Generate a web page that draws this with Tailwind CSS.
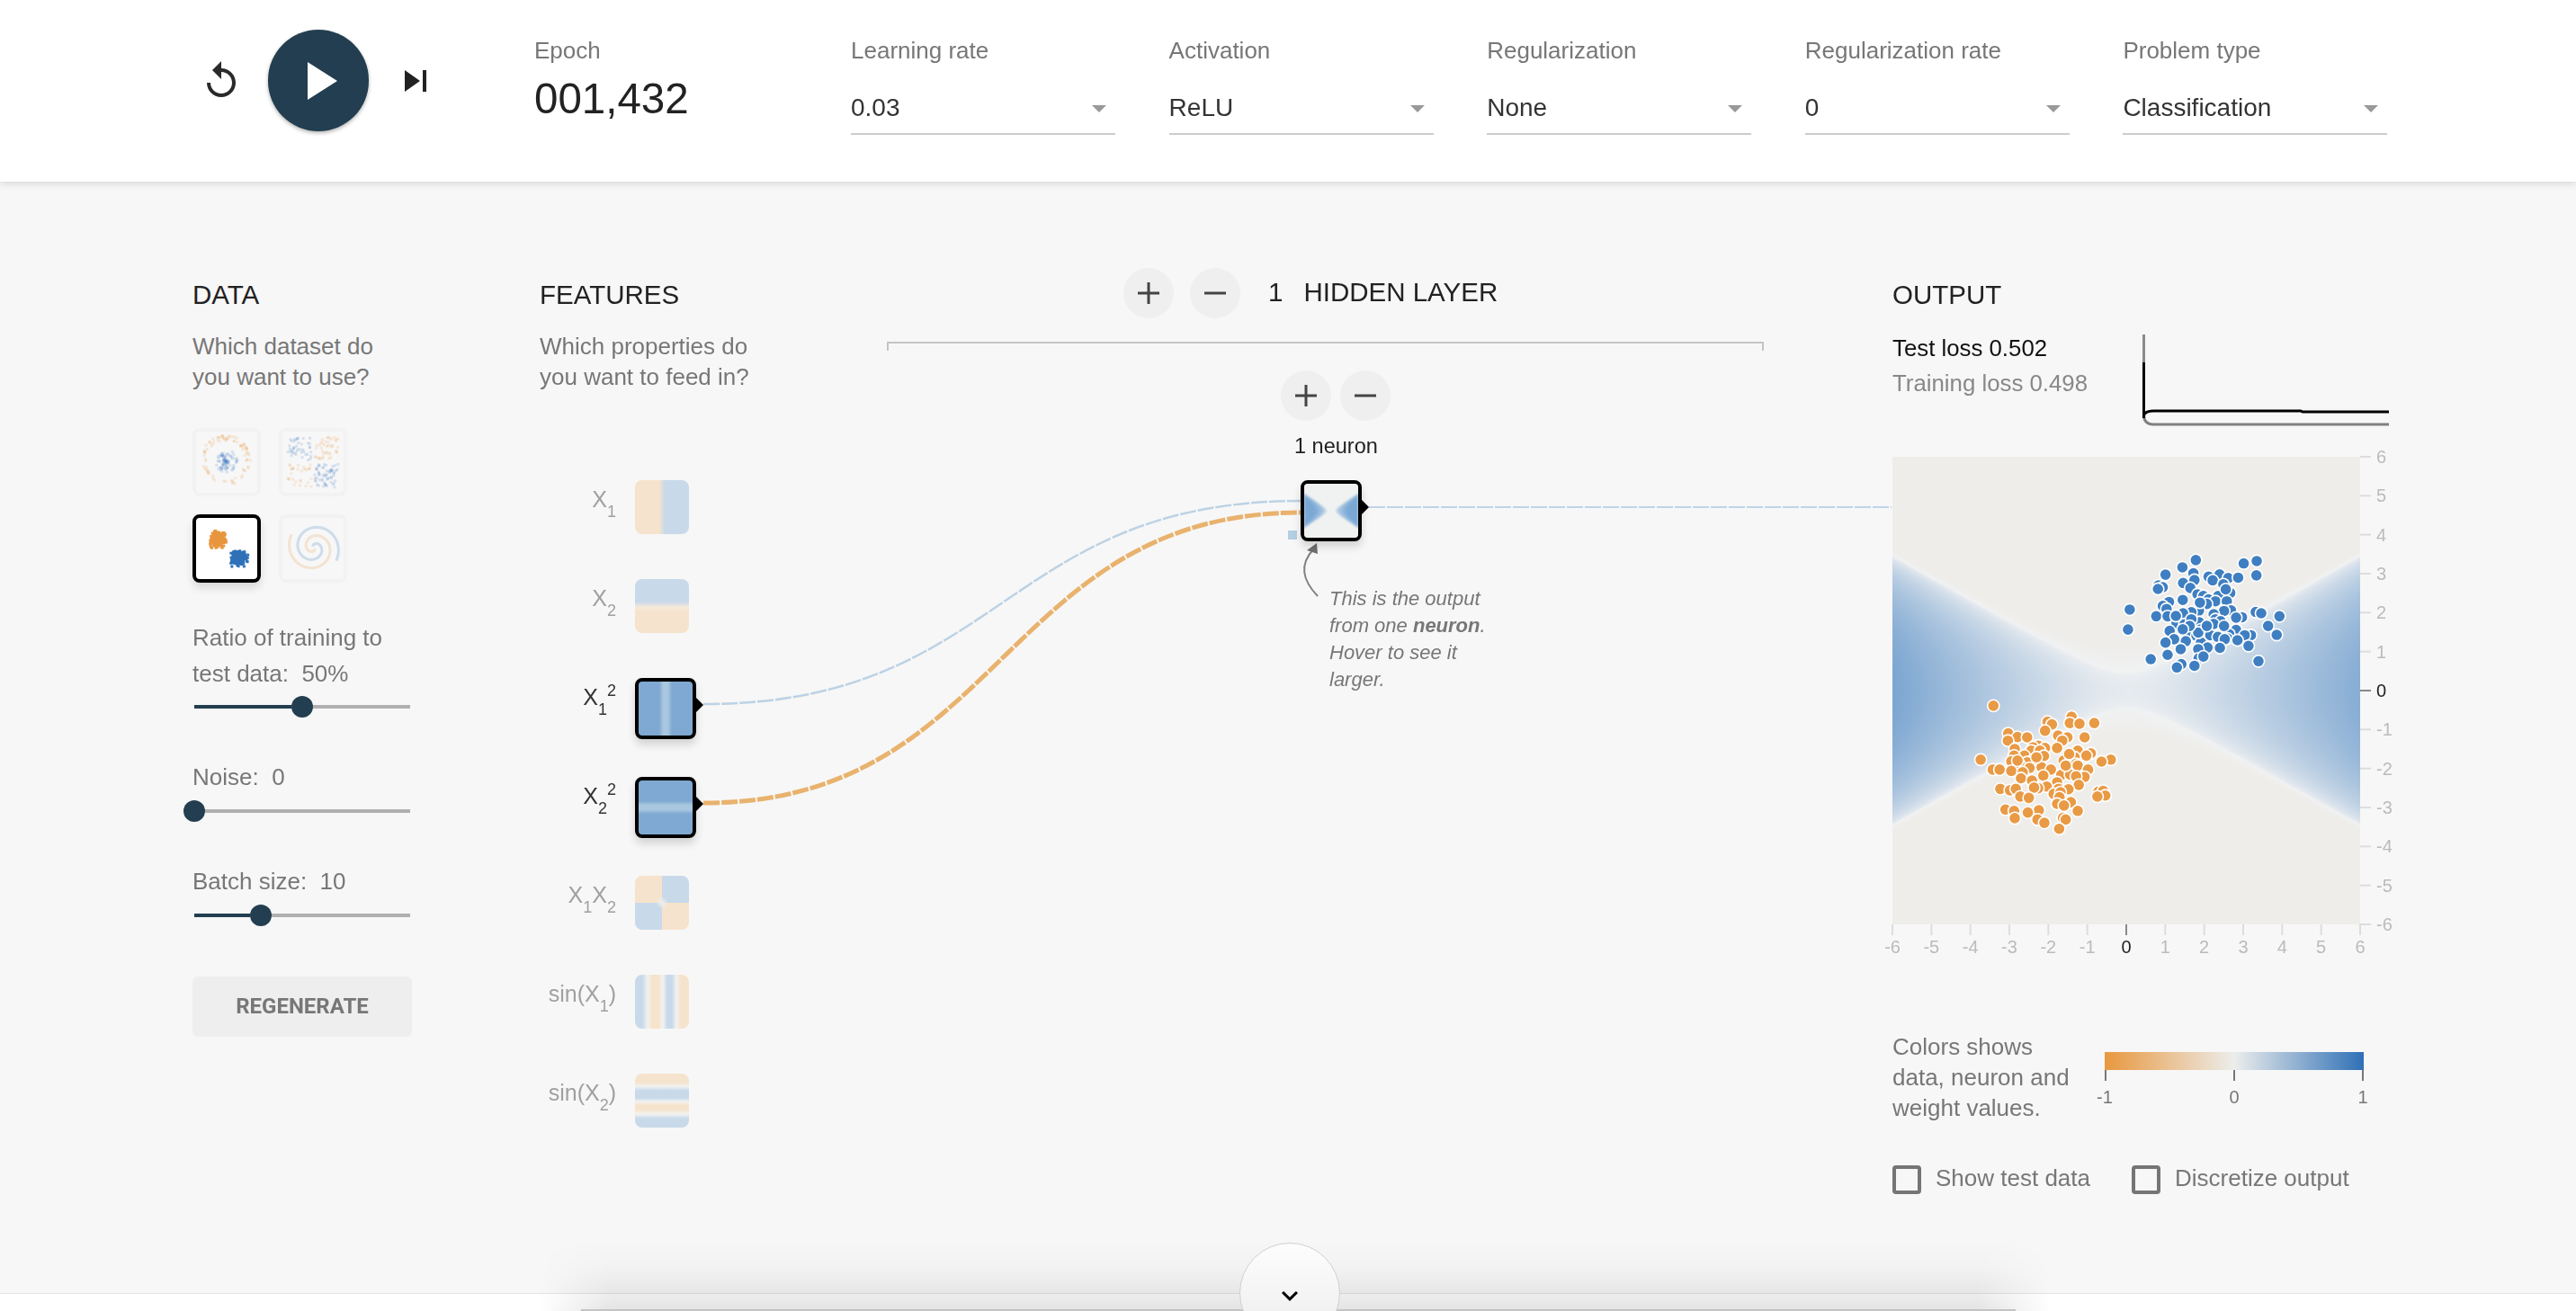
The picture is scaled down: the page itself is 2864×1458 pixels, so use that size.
<!DOCTYPE html>
<html lang="en">
<head>
    <meta charset="UTF-8">
    <title>A Neural Network Playground</title>
    <script src="https://cdn.jsdelivr.net/npm/@tailwindcss/browser@4"></script>
</head>
<body class="bg-[#f7f7f7] [font-family:'Liberation_Sans',Arial,sans-serif] text-[#777] overflow-hidden">
<div class="relative w-[2864px] h-[1458px] overflow-hidden">

    <!-- Top controls -->
    <header class="relative z-20 h-[202px] bg-white shadow-[0_2px_8px_rgba(0,0,0,0.14)] flex items-start pl-[222px]">
        <div class="flex items-center pt-[33px]">
            <svg class="w-12 h-12 fill-[#2a2a2a]" viewBox="0 0 24 24"><path d="M12 5V1L7 6l5 5V7c3.31 0 6 2.69 6 6s-2.69 6-6 6-6-2.69-6-6H4c0 4.42 3.58 8 8 8s8-3.58 8-8-3.58-8-8-8z"/></svg>
            <div class="ml-[28px] w-[112px] h-[113px] rounded-full bg-[#233e50] shadow-[0_2px_4px_rgba(0,0,0,0.3)] flex items-center justify-center">
                <svg class="w-[72px] h-[72px] fill-white" viewBox="0 0 24 24"><path d="M8 5v14l11-7z"/></svg>
            </div>
            <svg class="ml-[28px] w-12 h-12 fill-[#222]" viewBox="0 0 24 24"><path d="M6 18l8.5-6L6 6v12zM16 6v12h2V6h-2z"/></svg>
        </div>
        <div class="ml-[108px] w-[352px] pt-[41px]">
            <div class="text-[26px] leading-[30px]">Epoch</div>
            <div class="mt-[11px] text-[47.5px] leading-[56px] text-[#222]">001,432</div>
        </div>
        <div class="flex gap-[59.6px] pt-[41px]">
            <div class="w-[294px]">
                <div class="text-[26px] leading-[30px]">Learning rate</div>
                <div class="mt-[30px] h-[49px] pt-[2px] border-b-2 border-[#ccc] flex justify-between text-[28px] leading-[34px] text-[#333]">0.03<svg class="w-4 h-2 mt-[14px] mr-[10px] fill-[#999]" viewBox="0 0 16 8"><path d="M0 0h16L8 8z"/></svg></div>
            </div>
            <div class="w-[294px]">
                <div class="text-[26px] leading-[30px]">Activation</div>
                <div class="mt-[30px] h-[49px] pt-[2px] border-b-2 border-[#ccc] flex justify-between text-[28px] leading-[34px] text-[#333]">ReLU<svg class="w-4 h-2 mt-[14px] mr-[10px] fill-[#999]" viewBox="0 0 16 8"><path d="M0 0h16L8 8z"/></svg></div>
            </div>
            <div class="w-[294px]">
                <div class="text-[26px] leading-[30px]">Regularization</div>
                <div class="mt-[30px] h-[49px] pt-[2px] border-b-2 border-[#ccc] flex justify-between text-[28px] leading-[34px] text-[#333]">None<svg class="w-4 h-2 mt-[14px] mr-[10px] fill-[#999]" viewBox="0 0 16 8"><path d="M0 0h16L8 8z"/></svg></div>
            </div>
            <div class="w-[294px]">
                <div class="text-[26px] leading-[30px]">Regularization rate</div>
                <div class="mt-[30px] h-[49px] pt-[2px] border-b-2 border-[#ccc] flex justify-between text-[28px] leading-[34px] text-[#333]">0<svg class="w-4 h-2 mt-[14px] mr-[10px] fill-[#999]" viewBox="0 0 16 8"><path d="M0 0h16L8 8z"/></svg></div>
            </div>
            <div class="w-[294px]">
                <div class="text-[26px] leading-[30px]">Problem type</div>
                <div class="mt-[30px] h-[49px] pt-[2px] border-b-2 border-[#ccc] flex justify-between text-[28px] leading-[34px] text-[#333]">Classification<svg class="w-4 h-2 mt-[14px] mr-[10px] fill-[#999]" viewBox="0 0 16 8"><path d="M0 0h16L8 8z"/></svg></div>
            </div>
        </div>
    </header>

    <!-- Links between the nodes -->
    <svg class="absolute top-0 left-0 z-0 w-[2864px] h-[1458px] pointer-events-none" viewBox="0 0 2864 1458" fill="none">
        <path d="M782 783C1115 783 1115 557 1447 557" stroke="#bcd2e4" stroke-width="2.5" stroke-dasharray="18 2"/>
        <path d="M782 893C1115 893 1115 570 1447 570" stroke="#e9b26d" stroke-width="5" stroke-dasharray="18 2"/>
        <path d="M1522 564H2103" stroke="#bdd4ea" stroke-width="2" stroke-dasharray="18 2"/>
        <rect x="1432" y="590" width="10" height="10" fill="#b4cee2"/>
        <path d="M1465 663C1448 645 1444 628 1461 610" stroke="#808080" stroke-width="2"/>
        <path d="M1464 604L1453 612L1465 616z" fill="#6f6f6f"/>
    </svg>

    <main class="relative z-10 flex pl-[214px]">

        <!-- DATA -->
        <section class="w-[386px] pt-[108px]">
            <h4 class="text-[29.5px] leading-[36px] text-[#222]">DATA</h4>
            <p class="mt-[22px] text-[26px] leading-[34px]">Which dataset do<br>you want to use?</p>
            <div class="mt-[40px] grid grid-cols-[76px_76px] gap-[20px]">
                <div class="w-[76px] h-[76px] border-4 border-[#f2f2f2] rounded-lg"><canvas id="ds-circle" width="68" height="68"></canvas></div>
                <div class="w-[76px] h-[76px] border-4 border-[#f2f2f2] rounded-lg"><canvas id="ds-xor" width="68" height="68"></canvas></div>
                <div class="w-[76px] h-[76px] border-4 border-black rounded-lg bg-white shadow-[0_6px_10px_rgba(0,0,0,0.12)]"><canvas id="ds-gauss" width="68" height="68"></canvas></div>
                <div class="w-[76px] h-[76px] border-4 border-[#f2f2f2] rounded-lg"><canvas id="ds-spiral" width="68" height="68"></canvas></div>
            </div>

            <p class="mt-[41px] text-[26px] leading-[40px]">Ratio of training to<br>test data:&nbsp; 50%</p>
            <div class="mt-[5px] ml-[2px] w-[240px] h-6 flex items-center">
                <div class="w-[108px] h-1 bg-[#233e50]"></div>
                <div class="w-6 h-6 shrink-0 rounded-full bg-[#233e50]"></div>
                <div class="flex-1 h-1 bg-[#b0b0b0]"></div>
            </div>

            <p class="mt-[46px] text-[26px] leading-[40px]">Noise:&nbsp; 0</p>
            <div class="mt-[6px] ml-[2px] w-[240px] h-6 flex items-center">
                <div class="w-6 h-6 -ml-3 shrink-0 rounded-full bg-[#233e50]"></div>
                <div class="flex-1 h-1 bg-[#b0b0b0]"></div>
            </div>

            <p class="mt-[46px] text-[26px] leading-[40px]">Batch size:&nbsp; 10</p>
            <div class="mt-[6px] ml-[2px] w-[240px] h-6 flex items-center">
                <div class="w-[62px] h-1 bg-[#233e50]"></div>
                <div class="w-6 h-6 shrink-0 rounded-full bg-[#233e50]"></div>
                <div class="flex-1 h-1 bg-[#b0b0b0]"></div>
            </div>

            <button class="mt-[56px] w-[244px] h-[67px] pb-[2px] rounded-md bg-[#eee] [font-family:Roboto,sans-serif] font-bold text-[24px] text-[#777]">REGENERATE</button>
        </section>

        <!-- FEATURES -->
        <section class="w-[386px] pt-[108px]">
            <h4 class="text-[29.5px] leading-[36px] text-[#222]">FEATURES</h4>
            <p class="mt-[22px] text-[26px] leading-[34px]">Which properties do<br>you want to feed in?</p>
            <div class="mt-[98px] flex flex-col gap-[50px]">
                <div class="h-[60px] flex">
                    <div class="w-[85px] pt-[6px] text-right text-[25px] leading-[30px] text-[#a0a0a0]">X<span class="relative top-[11px] text-[18px] leading-none">1</span></div>
                    <div class="ml-[21px] w-[60px] h-[60px] rounded-lg bg-[linear-gradient(90deg,#f6e3cd_0,#f6e3cd_45%,#c8d9ea_55%,#c8d9ea_100%)]"></div>
                </div>
                <div class="h-[60px] flex">
                    <div class="w-[85px] pt-[6px] text-right text-[25px] leading-[30px] text-[#a0a0a0]">X<span class="relative top-[11px] text-[18px] leading-none">2</span></div>
                    <div class="ml-[21px] w-[60px] h-[60px] rounded-lg bg-[linear-gradient(180deg,#c8d9ea_0,#c8d9ea_42%,#f6e9da_52%,#f6e3cd_60%,#f6e3cd_100%)]"></div>
                </div>
                <div class="h-[60px] flex">
                    <div class="w-[85px] pt-[6px] text-right text-[25px] leading-[30px] text-[#333]">X<span class="relative top-[11px] text-[18px] leading-none">1</span><span class="relative -top-[10px] text-[18px] leading-none">2</span></div>
                    <div class="relative ml-[21px] w-[68px] h-[68px] shrink-0 rounded-lg border-4 border-black shadow-[0_6px_10px_rgba(0,0,0,0.15)] bg-[linear-gradient(90deg,#7fa9d2_0,#7fa9d2_38%,#a9c8e0_46%,#a9c8e0_54%,#7fa9d2_62%,#7fa9d2_100%)]">
                        <span class="absolute -right-3 top-[18px] w-0 h-0 border-y-[8px] border-y-transparent border-l-[8px] border-l-black"></span>
                    </div>
                </div>
                <div class="h-[60px] flex">
                    <div class="w-[85px] pt-[6px] text-right text-[25px] leading-[30px] text-[#333]">X<span class="relative top-[11px] text-[18px] leading-none">2</span><span class="relative -top-[10px] text-[18px] leading-none">2</span></div>
                    <div class="relative ml-[21px] w-[68px] h-[68px] shrink-0 rounded-lg border-4 border-black shadow-[0_6px_10px_rgba(0,0,0,0.15)] bg-[linear-gradient(180deg,#7fa9d2_0,#7fa9d2_38%,#a9c8e0_46%,#a9c8e0_54%,#7fa9d2_62%,#7fa9d2_100%)]">
                        <span class="absolute -right-3 top-[18px] w-0 h-0 border-y-[8px] border-y-transparent border-l-[8px] border-l-black"></span>
                    </div>
                </div>
                <div class="h-[60px] flex">
                    <div class="w-[85px] pt-[6px] text-right text-[25px] leading-[30px] text-[#a0a0a0]">X<span class="relative top-[11px] text-[18px] leading-none">1</span>X<span class="relative top-[11px] text-[18px] leading-none">2</span></div>
                    <div class="ml-[21px] w-[60px] h-[60px] rounded-lg bg-[radial-gradient(circle,#eef0f0_0,transparent_7px),conic-gradient(#c8d9ea_25%,#f6e3cd_25%_50%,#c8d9ea_50%_75%,#f6e3cd_75%)]"></div>
                </div>
                <div class="h-[60px] flex justify-end w-[166px]">
                    <div class="pt-[6px] text-right text-[25px] leading-[30px] text-[#a0a0a0] whitespace-nowrap">sin(X<span class="relative top-[11px] text-[18px] leading-none">1</span>)</div>
                    <div class="ml-[21px] w-[60px] h-[60px] rounded-lg bg-[linear-gradient(90deg,#c8d9ea_0,#c8d9ea_8px,#f2f2f0_14px,#f6e3cd_19px,#f6e3cd_26px,#f2f2f0_31px,#c8d9ea_36px,#c8d9ea_41px,#f2f2f0_46px,#f6e3cd_51px,#f6e3cd_60px)]"></div>
                </div>
                <div class="h-[60px] flex justify-end w-[166px]">
                    <div class="pt-[6px] text-right text-[25px] leading-[30px] text-[#a0a0a0] whitespace-nowrap">sin(X<span class="relative top-[11px] text-[18px] leading-none">2</span>)</div>
                    <div class="ml-[21px] w-[60px] h-[60px] rounded-lg bg-[linear-gradient(180deg,#f6e3cd_0,#f6e3cd_10px,#f2f2f0_14px,#c8d9ea_19px,#c8d9ea_27px,#f2f2f0_31px,#f6e3cd_35px,#f6e3cd_40px,#f2f2f0_45px,#c8d9ea_50px,#c8d9ea_60px)]"></div>
                </div>
            </div>
        </section>

        <!-- Network -->
        <section class="w-[975px] pt-[96px]">
            <div class="pl-[263px] flex items-center h-14">
                <div class="w-14 h-14 rounded-full bg-[#efefef] flex items-center justify-center"><svg class="w-6 h-6 stroke-[#444]" viewBox="0 0 24 24" stroke-width="3"><path d="M12 0v24M0 12h24"/></svg></div>
                <div class="ml-[18px] w-14 h-14 rounded-full bg-[#efefef] flex items-center justify-center"><svg class="w-6 h-6 stroke-[#444]" viewBox="0 0 24 24" stroke-width="3"><path d="M0 12h24"/></svg></div>
                <span class="ml-[31px] pb-[3px] text-[29.5px] leading-[36px] text-[#222]">1</span>
                <span class="ml-[23px] pb-[3px] text-[29.5px] leading-[36px] text-[#222]">HIDDEN LAYER</span>
            </div>
            <div class="mt-[26px] h-[10px] border-x-2 border-t-2 border-[#c4c4c4]"></div>
            <div class="mt-[22px] pl-[438px] flex gap-[10px]">
                <div class="w-14 h-14 rounded-full bg-[#efefef] flex items-center justify-center"><svg class="w-6 h-6 stroke-[#444]" viewBox="0 0 24 24" stroke-width="3"><path d="M12 0v24M0 12h24"/></svg></div>
                <div class="w-14 h-14 rounded-full bg-[#efefef] flex items-center justify-center"><svg class="w-6 h-6 stroke-[#444]" viewBox="0 0 24 24" stroke-width="3"><path d="M0 12h24"/></svg></div>
            </div>
            <div class="mt-[14px] pl-[453px] text-[23.5px] leading-[28px] text-[#222]">1 neuron</div>
            <div class="mt-[24px] ml-[460px] relative w-[68px] h-[68px] rounded-lg border-4 border-black bg-[#f0f2f2] shadow-[0_6px_10px_rgba(0,0,0,0.15)]">
                <div class="w-[60px] h-[60px] overflow-hidden rounded-[4px]"><canvas id="neuron" width="60" height="60" class="blur-[1px]"></canvas></div>
                <span class="absolute -right-3 top-[18px] w-0 h-0 border-y-[8px] border-y-transparent border-l-[8px] border-l-black"></span>
            </div>
            <p class="mt-[49px] pl-[492px] italic text-[22px] leading-[30px]">This is the output<br>from one <b>neuron</b>.<br>Hover to see it<br>larger.</p>
        </section>

        <!-- OUTPUT -->
        <section class="ml-[143px] w-[552px] pt-[108px]">
            <h4 class="text-[29.5px] leading-[36px] text-[#222]">OUTPUT</h4>
            <div class="mt-[22px] h-[140px] flex justify-between">
                <div class="text-[25.8px] leading-[39px]">
                    <div class="text-[#111]">Test loss 0.502</div>
                    <div class="text-[#888]">Training loss 0.498</div>
                </div>
                <svg class="mt-1 w-[274px] h-[106px]" viewBox="0 0 274 106" fill="none">
                    <path d="M1.5 0V31" stroke="#8a8a8a" stroke-width="3"/>
                    <path d="M1.5 85V90Q2 100 12 100H274" stroke="#808080" stroke-width="3"/>
                    <path d="M1.5 31V93M1.5 90Q3 85 12 85H176L178 86H274" stroke="#000" stroke-width="3"/>
                </svg>
            </div>
            <div class="relative w-[552px] h-[560px]">
                <canvas id="heatmap" width="520" height="520" class="block"></canvas>
                <svg id="chart" class="absolute top-0 left-0 overflow-visible w-[552px] h-[560px]" viewBox="0 0 552 560"></svg>
            </div>
            <div class="mt-[79px] flex">
                <p class="w-[236px] text-[26px] leading-[34px] whitespace-nowrap">Colors shows<br>data, neuron and<br>weight values.</p>
                <svg class="mt-[23px] w-[300px] h-[64px] overflow-visible" viewBox="0 0 300 64">
                    <defs><linearGradient id="scale"><stop offset="0" stop-color="#e8983f"/><stop offset="0.5" stop-color="#ecedeb"/><stop offset="1" stop-color="#2f70b6"/></linearGradient></defs>
                    <rect width="288" height="20" fill="url(#scale)"/>
                    <path d="M1 20v12M144 20v12M287 20v12" stroke="#777" stroke-width="2"/>
                    <text x="0" y="57" text-anchor="middle" font-size="20" fill="#777">-1</text>
                    <text x="144" y="57" text-anchor="middle" font-size="20" fill="#777">0</text>
                    <text x="287" y="57" text-anchor="middle" font-size="20" fill="#777">1</text>
                </svg>
            </div>
            <div class="mt-[47px] flex items-center text-[26px] leading-[28px]">
                <span class="w-8 h-8 rounded border-4 border-[#757575]"></span>
                <span class="ml-[16px] pb-1">Show test data</span>
                <span class="ml-[46px] w-8 h-8 rounded border-4 border-[#757575]"></span>
                <span class="ml-[16px] pb-1">Discretize output</span>
            </div>
        </section>
    </main>

    <!-- Bottom edge with the scroll button -->
    <div class="absolute z-10 left-0 right-0 top-[1438px] h-5 bg-white border-t border-t-[#e4e4e4]"></div>
    <div class="absolute z-10 left-[600px] w-[1680px] top-[1378px] h-20 bg-[linear-gradient(180deg,rgba(0,0,0,0)_0,rgba(0,0,0,0.02)_40%,rgba(0,0,0,0.06)_70%,rgba(0,0,0,0.11)_100%)] [mask-image:linear-gradient(90deg,transparent,black_80px,black_calc(100%-80px),transparent)]"></div>
    <div class="absolute z-10 left-[646px] w-[1595px] top-[1456px] h-0.5 bg-[#c4c4c4]"></div>
    <button class="absolute z-20 left-[1378px] top-[1382px] w-[112px] h-[112px] rounded-full bg-linear-to-b from-[#fdfdfd] to-[#ececec] border border-[#d0d0d0] flex justify-center pt-[40px]">
        <svg class="w-[36px] h-[36px] fill-black" viewBox="0 0 24 24"><path d="M7.41 8.59L12 13.17l4.59-4.58L18 10l-6 6-6-6z"/></svg>
    </button>
</div>

<script>
    // zoomed reference coordinates of the training points
    const bluePoints = [[918,332],[1095,335],[1057,342],[879,354],[911,372],[830,376],[1094,378],[955,382],[987,375],[1012,386],[1041,385],[967,393],[914,392],[881,401],[998,405],[810,408],[822,414],[808,419],[902,416],[1018,431],[923,435],[940,440],[983,440],[840,458],[880,452],[955,450],[975,456],[1008,456],[822,470],[833,479],[950,464],[726,481],[1020,483],[1000,485],[927,484],[905,489],[881,492],[1092,488],[1108,492],[803,501],[836,501],[1161,501],[1052,504],[1035,505],[970,495],[975,510],[990,516],[928,519],[970,524],[862,522],[885,525],[1128,530],[842,545],[721,541],[932,541],[1035,542],[1078,558],[1153,557],[891,557],[920,560],[960,558],[982,563],[1015,555],[1010,568],[1002,570],[1060,558],[1039,573],[855,570],[889,576],[933,580],[830,580],[1071,590],[988,596],[952,595],[925,600],[874,600],[836,617],[787,630],[926,628],[940,622],[1100,636],[876,645],[863,655],[914,650],[905,510],[925,550],[900,530],[950,530],[860,500],[1000,530],[880,540],[1005,420],[930,460]];
    const orangePoints = [[330,770],[557,803],[487,818],[500,826],[552,822],[580,824],[623,822],[480,845],[373,853],[400,864],[428,865],[518,860],[545,865],[595,865],[530,875],[372,875],[460,890],[445,895],[480,897],[515,897],[392,900],[440,905],[465,905],[575,905],[613,913],[600,920],[477,921],[420,920],[390,920],[566,925],[293,932],[671,932],[534,935],[644,938],[382,937],[445,933],[428,940],[405,945],[570,945],[575,950],[328,962],[348,962],[382,966],[605,962],[470,955],[497,962],[435,957],[415,970],[475,980],[527,978],[553,977],[595,984],[570,982],[410,988],[442,995],[515,1000],[578,1008],[485,1013],[460,1018],[448,1016],[350,1020],[378,1024],[395,1020],[519,1020],[548,1021],[635,1028],[649,1026],[655,1040],[632,1043],[505,1035],[525,1030],[408,1043],[433,1047],[522,1045],[555,1060],[515,1065],[535,1070],[365,1082],[390,1086],[462,1084],[575,1086],[430,1091],[392,1108],[532,1107],[540,1112],[458,1112],[478,1122],[521,1140],[400,935],[455,925],[550,915],[540,950]];

    const NS = 'http://www.w3.org/2000/svg';
    const chart = document.getElementById('chart');

    function add(tag, attrs, text) {
        const el = document.createElementNS(NS, tag);
        for (const k in attrs) el.setAttribute(k, attrs[k]);
        if (text !== undefined) el.textContent = text;
        chart.appendChild(el);
    }

    // axes
    for (let v = -6; v <= 6; v++) {
        const y = 260 - v * 43.33;
        const x = 260 + v * 43.33;
        add('path', { d: `M520 ${y}h12`, stroke: v === 0 ? '#888' : '#ddd', 'stroke-width': 2 });
        add('path', { d: `M${x} 520v12`, stroke: v === 0 ? '#888' : '#ddd', 'stroke-width': 2 });
        add('text', { x: 538, y: y + 7, 'font-size': 20, fill: v === 0 ? '#222' : '#bbb' }, v);
        add('text', { x: x, y: 552, 'font-size': 20, 'text-anchor': 'middle', fill: v === 0 ? '#222' : '#bbb' }, v);
    }

    // points
    function drawPoints(list, color) {
        list.forEach(([zx, zy]) => {
            add('circle', {
                cx: 2090 + zx / 2.613 - 2104,
                cy: 500 + zy / 2.703 - 508,
                r: 6.6, fill: color, stroke: '#fff', 'stroke-width': 1.6
            });
        });
    }
    drawPoints(bluePoints, '#3f7fc1');
    drawPoints(orangePoints, '#e99a45');

    function mix(a, b, t) {
        return a.map((c, i) => Math.round(c + (b[i] - c) * t));
    }

    // the neuron's decision surface: blue where x1^2 outweighs x2^2
    function paintSurface(id, size, o) {
        const ctx = document.getElementById(id).getContext('2d');
        const img = ctx.createImageData(size, size);
        for (let j = 0; j < size; j++) {
            for (let i = 0; i < size; i++) {
                const x = (i + 0.5) / size * 12 - 6;
                const y = 6 - (j + 0.5) / size * 12;
                const v = x * x - (y / o.slope) * (y / o.slope) - o.offset;
                let c = o.bg;
                if (v > 0) {
                    let t = Math.min(1, Math.pow(v / 36, o.power) * o.gain);
                    if (x > 0) t *= o.right;
                    c = mix(o.edge, o.blue, t);
                } else if (v > -o.fade) {
                    c = mix(o.edge, o.bg, -v / o.fade);
                }
                const p = (j * size + i) * 4;
                img.data[p] = c[0]; img.data[p + 1] = c[1]; img.data[p + 2] = c[2]; img.data[p + 3] = 255;
            }
        }
        ctx.putImageData(img, 0, 0);
    }
    paintSurface('heatmap', 520, { slope: 0.57, offset: -0.62, power: 0.58, gain: 1, right: 0.9, fade: 3, bg: [238, 237, 234], edge: [240, 241, 242], blue: [124, 166, 209] });
    paintSurface('neuron', 60, { slope: 0.66, offset: 1, power: 0.3, gain: 1.35, right: 1, fade: 1.5, bg: [240, 242, 242], edge: [240, 242, 242], blue: [122, 168, 213] });

    // dataset thumbnails, seeded so the picture is stable
    let seed = 7;
    function rnd() {
        seed = (seed * 16807) % 2147483647;
        return seed / 2147483647;
    }
    function gauss() {
        return (rnd() + rnd() + rnd() - 1.5) / 1.5;
    }
    function dots(id, list, alpha) {
        const ctx = document.getElementById(id).getContext('2d');
        ctx.globalAlpha = alpha;
        list.forEach(([x, y, c]) => {
            ctx.fillStyle = c;
            ctx.fillRect(x - 1.5, y - 1.5, 3, 3);
        });
    }
    const O = '#e8963e', B = '#2f72b8';
    const circle = [], xor = [], blob = [];
    for (let i = 0; i < 90; i++) {
        const a = rnd() * 6.283, r = 22 + rnd() * 6;
        circle.push([33 + r * Math.cos(a), 32 + r * Math.sin(a), O]);
        const a2 = rnd() * 6.283, r2 = rnd() * 13;
        circle.push([33 + r2 * Math.cos(a2), 33 + r2 * Math.sin(a2), B]);
    }
    for (let i = 0; i < 200; i++) {
        const x = 6 + rnd() * 56, y = 6 + rnd() * 56;
        if (Math.abs(x - 34) < 2 || Math.abs(y - 34) < 2) continue;
        xor.push([x, y, (x - 34) * (y - 34) > 0 ? B : O]);
    }
    for (let i = 0; i < 200; i++) {
        blob.push([24 + gauss() * 12, 24 + gauss() * 11, O]);
        blob.push([47 + gauss() * 12, 45 + gauss() * 11, B]);
    }
    dots('ds-circle', circle, 0.16);
    dots('ds-xor', xor, 0.16);
    dots('ds-gauss', blob, 1);

    const sp = document.getElementById('ds-spiral').getContext('2d');
    sp.globalAlpha = 0.2;
    sp.lineWidth = 3;
    [[0, B], [Math.PI, O]].forEach(([offset, color]) => {
        sp.strokeStyle = color;
        sp.beginPath();
        for (let t = 0.5; t < 9.6; t += 0.1) {
            const r = t * 3;
            const a = t + offset + 3.5;
            sp.lineTo(35 + r * Math.cos(a), 33 + r * Math.sin(a));
        }
        sp.stroke();
    });
</script>
</body>
</html>
